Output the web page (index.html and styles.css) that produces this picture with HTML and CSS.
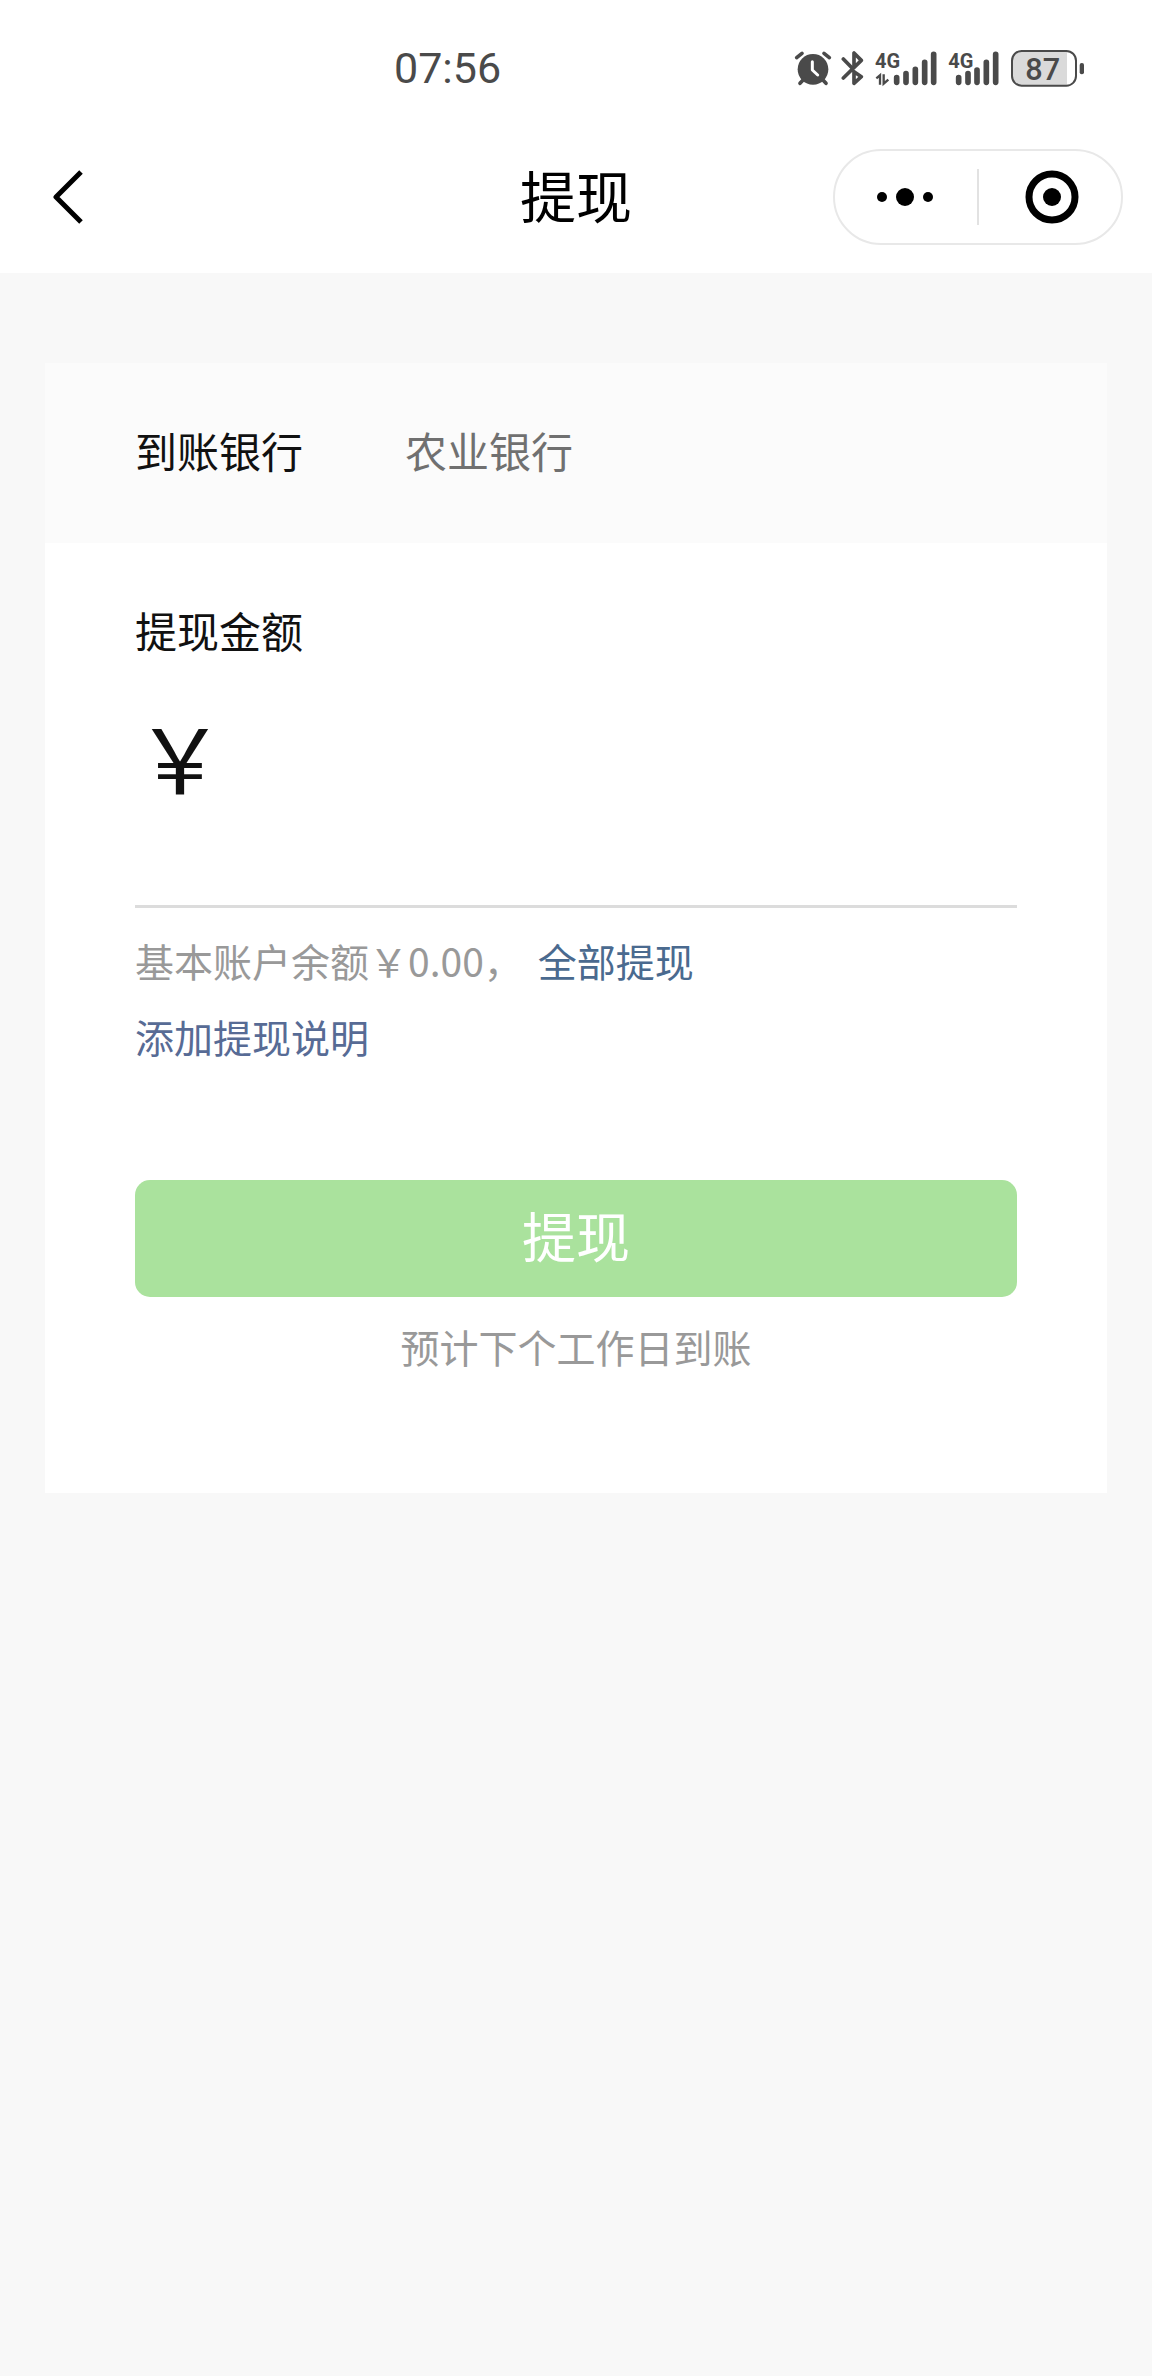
FILE: index.html
```html
<!DOCTYPE html>
<html lang="zh-CN">
  <head>
    <meta charset="utf-8" />
    <meta name="viewport" content="width=device-width, initial-scale=1" />
    <title>提现</title>
    <link rel="stylesheet" href="styles.css">
  </head>

  <body>
    <header class="header">
      <div class="status-bar">
        <time class="clock">07:56</time>
        <div class="status-icons">
          <svg class="icon-alarm" viewBox="36 36 114 114" aria-label="闹钟">
            <circle cx="93" cy="97" r="46" fill="#4a4a4a" />
            <path d="M44 62L60 49M126 49L142 62M66 126L54 139M120 126L132 139" stroke="#4a4a4a" stroke-width="11" stroke-linecap="round" />
            <path d="M91 74V99L107 114" fill="none" stroke="#fff" stroke-width="9" stroke-linecap="round" stroke-linejoin="round" />
          </svg>
          <svg class="icon-bluetooth" viewBox="180 36 72 114" aria-label="蓝牙">
            <path d="M187 66L214 94M187 123L241 70L219 48V84M219 104L241 119L219 139V104" fill="none" stroke="#4a4a4a" stroke-width="11" stroke-linecap="round" stroke-linejoin="round" />
          </svg>
          <svg class="icon-signal" viewBox="282 36 192 114" aria-label="信号一">
            <text x="285" y="92" class="signal-text">4G</text>
            <path d="M350 122V136M378 110V136M406 97V136M434 76V136M461 52V136" stroke="#4a4a4a" stroke-width="17" stroke-linecap="round" />
            <path d="M289 124L300 115V143M311 112V140L325 128" fill="none" stroke="#4a4a4a" stroke-width="7" />
          </svg>
          <svg class="icon-signal" viewBox="502 36 162 114" aria-label="信号二">
            <text x="506" y="92" class="signal-text">4G</text>
            <path d="M537 122V136M565 110V136M592 99V136M620 76V136M648 52V136" stroke="#4a4a4a" stroke-width="17" stroke-linecap="round" />
          </svg>
          <svg class="icon-battery" viewBox="690 36 222 114" aria-label="电量 87%">
            <rect x="696" y="42" width="192" height="104" rx="29" fill="#fff" />
            <path d="M725 43H861V145H725A28 28 0 0 1 697 117V71A28 28 0 0 1 725 43Z" fill="#dadada" />
            <rect x="696" y="42" width="192" height="104" rx="29" fill="none" stroke="#4a4a4a" stroke-width="6" />
            <rect x="899" y="78" width="13" height="34" rx="6" fill="#4a4a4a" />
            <text x="788" y="128" text-anchor="middle" class="battery-text">87</text>
          </svg>
        </div>
      </div>

      <nav class="nav-bar">
        <button class="back-btn" type="button" aria-label="返回">
          <svg width="32" height="56" viewBox="0 0 32 56">
            <path d="M28 3L3 28L28 53" fill="none" stroke="#000" stroke-width="5" stroke-linejoin="round" />
          </svg>
        </button>
        <h1 class="title">提现</h1>
        <div class="capsule">
          <button class="capsule-btn" type="button" aria-label="更多">
            <svg width="60" height="56" viewBox="0 0 60 56">
              <circle cx="6" cy="28" r="5" />
              <circle cx="29" cy="28" r="9" />
              <circle cx="52" cy="28" r="5" />
            </svg>
          </button>
          <span class="capsule-line"></span>
          <button class="capsule-btn" type="button" aria-label="关闭">
            <svg width="60" height="56" viewBox="0 0 60 56">
              <circle cx="32" cy="28" r="23" fill="none" stroke="#000" stroke-width="7" />
              <circle cx="32" cy="28" r="9" />
            </svg>
          </button>
        </div>
      </nav>
    </header>

    <main class="card">
      <div class="bank-row">
        <span class="bank-label">到账银行</span>
        <span class="bank-name">农业银行</span>
      </div>

      <form class="withdraw-form">
        <label class="amount-label" for="amount">提现金额</label>
        <div class="amount-row">
          <span class="currency">￥</span>
          <input class="amount-input" id="amount" type="text" inputmode="decimal" autocomplete="off">
        </div>
        <div class="balance">
          <span>基本账户余额￥0.00，</span>
          <a class="link-all" href="#all">全部提现</a>
        </div>
        <div class="remark"><a class="link-remark" href="#remark">添加提现说明</a></div>
        <button class="submit-btn" type="button">提现</button>
        <p class="tip">预计下个工作日到账</p>
      </form>
    </main>
  </body>
</html>
```
FILE: styles.css
```css
* {
  box-sizing: border-box;
}
body {
  margin: 0;
  background-color: #f8f8f8;
  font-family: "Noto Sans CJK SC", sans-serif;
  color: #111;
}
button {
  padding: 0;
  border: none;
  background: none;
  font-family: inherit;
  cursor: pointer;
}
a {
  text-decoration: none;
}
svg {
  display: block;
}

/* header */
.header {
  background-color: #fff;
}
.status-bar {
  display: flex;
  align-items: center;
  justify-content: space-between;
  height: 120px;
  padding: 16px 68px 0 394px;
}
.clock {
  font-family: Roboto, sans-serif;
  font-size: 43px;
  font-weight: 400;
  line-height: 48px;
  color: #4a4a4a;
}
.status-icons {
  display: flex;
  align-items: center;
  gap: 9px;
}
.status-icons svg {
  height: 38px;
}
.signal-text, .battery-text {
  font-family: Roboto, sans-serif;
  fill: #4a4a4a;
}
.signal-text {
  font-size: 60px;
  font-weight: 700;
}
.battery-text {
  font-size: 92px;
  font-weight: 500;
}
.nav-bar {
  display: grid;
  grid-template-columns: 1fr auto 1fr;
  align-items: center;
  height: 153px;
  padding: 0 29px;
}
.back-btn {
  justify-self: start;
  padding: 20px 24px;
}
.title {
  margin: 0;
  padding-bottom: 5px;
  font-size: 56px;
  font-weight: 400;
  line-height: 80px;
  color: #000;
}
.capsule {
  display: flex;
  align-items: center;
  justify-self: end;
  width: 290px;
  height: 96px;
  border: 2px solid #e8e8e8;
  border-radius: 48px;
}
.capsule-btn {
  display: flex;
  flex: 1;
  align-items: center;
  justify-content: center;
  height: 100%;
}
.capsule-line {
  width: 2px;
  height: 56px;
  background-color: #e2e2e2;
}

/* card */
.card {
  margin: 90px 45px;
  background-color: #fff;
}
.bank-row {
  display: flex;
  align-items: center;
  height: 180px;
  padding: 0 90px 8px;
  background-color: #fbfbfb;
  font-size: 42px;
}
.bank-label {
  width: 270px;
}
.bank-name {
  color: #707070;
}
.withdraw-form {
  padding: 57px 90px 117px;
}
.amount-label {
  display: block;
  font-size: 42px;
  line-height: 60px;
}
.amount-row {
  display: flex;
  padding: 35px 0 90px;
  border-bottom: 3px solid #dcdcdc;
  font-size: 90px;
  line-height: 120px;
}
.amount-input {
  flex: 1;
  min-width: 0;
  height: 120px;
  padding: 0;
  border: none;
  outline: none;
  background: none;
  font: inherit;
  color: inherit;
}
.balance, .remark, .tip {
  font-size: 39px;
  line-height: 76px;
}
.balance {
  display: flex;
  gap: 15px;
  padding-top: 14px;
  color: #999;
}
.link-all {
  color: #4a6a8f;
}
.link-remark {
  color: #576b95;
}
.submit-btn {
  display: block;
  width: 100%;
  height: 117px;
  margin-top: 106px;
  padding-bottom: 8px;
  border-radius: 15px;
  background-color: #aae29d;
  font-size: 54px;
  color: #fff;
}
.tip {
  margin: 19px 0 0;
  line-height: 60px;
  text-align: center;
  color: #999;
}
```
